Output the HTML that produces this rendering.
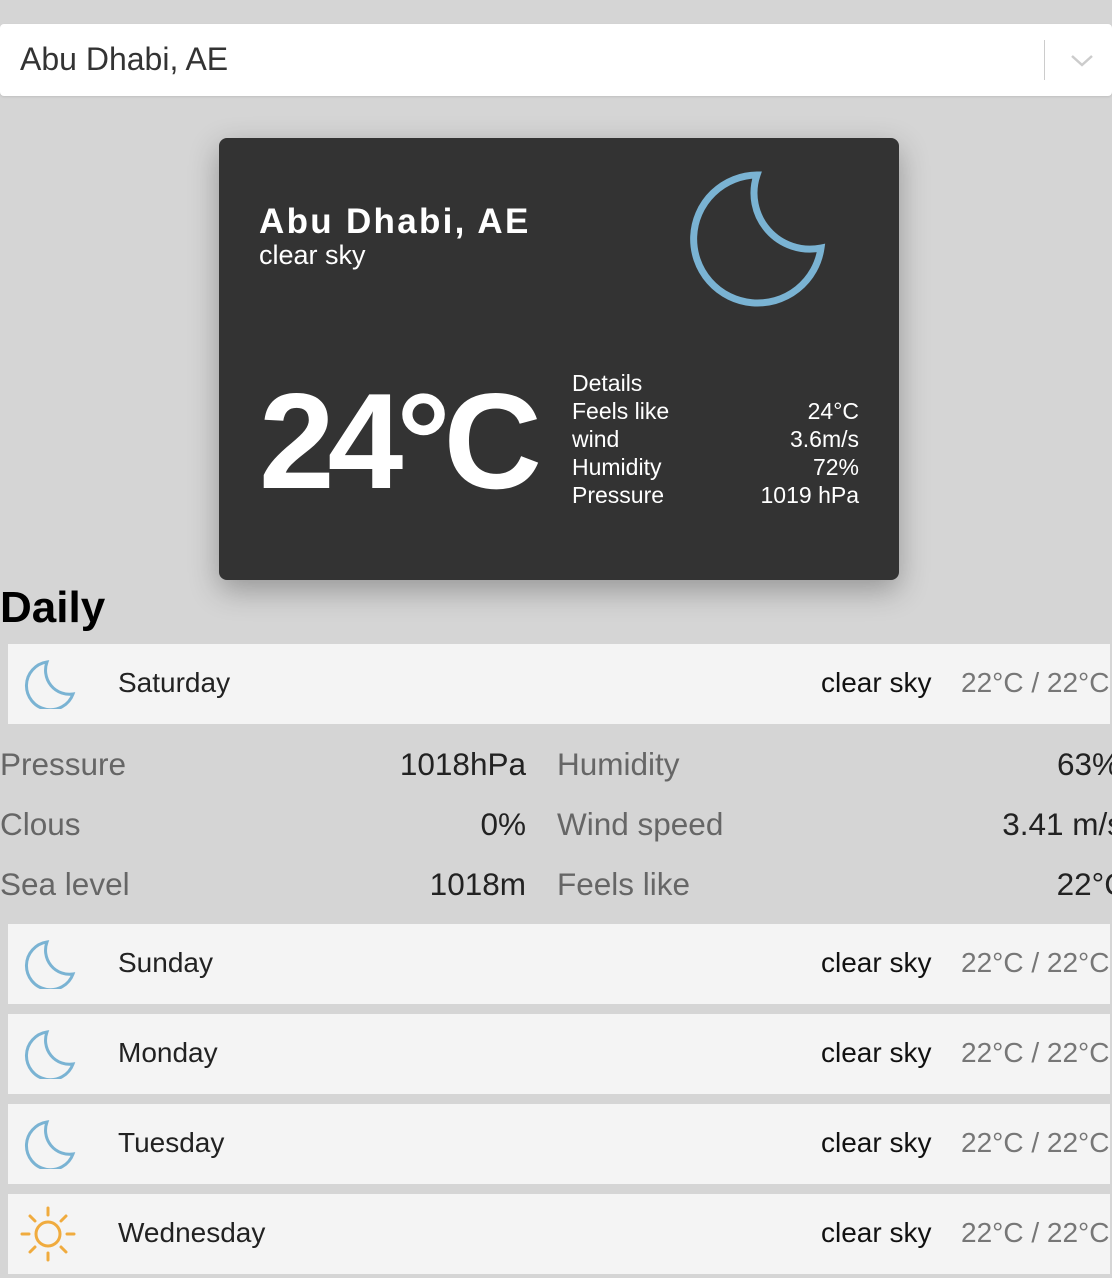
<!DOCTYPE html>
<html><head><meta charset="utf-8"><style>
*{margin:0;padding:0;box-sizing:border-box}
body{width:1112px;height:1278px;background:#d5d5d5;font-family:"Liberation Sans",Arial,sans-serif;position:relative;overflow:hidden}
.a{position:absolute;white-space:nowrap}
.sel{position:absolute;left:0;top:24px;width:1112px;height:72px;background:#fff;border-radius:4px;box-shadow:0 1px 2px rgba(0,0,0,.1)}
.card{position:absolute;left:219px;top:138px;width:680px;height:442px;background:#333;border-radius:8px;box-shadow:0 10px 30px rgba(0,0,0,.3);color:#fff}
.row{position:absolute;left:8px;width:1102px;height:80px;background:#f4f4f4;overflow:hidden}
.row .d{position:absolute;left:110px;top:23px;font-size:28px;color:#222}
.row .c{position:absolute;left:813px;top:23px;font-size:28px;color:#111}
.row .t{position:absolute;left:953px;top:23px;font-size:28px;color:#777}
.row svg{position:absolute;left:10px;top:15px}
.lab{font-size:31.5px;color:#666}
.val{font-size:31.5px;color:#222;text-align:right}
.det{font-size:23px;line-height:28px}
</style></head><body>
<div class="sel">
<div class="a" style="left:20px;top:17px;font-size:32px;color:#333">Abu Dhabi, AE</div>
<div class="a" style="left:1044px;top:16px;width:1px;height:40px;background:#ccc"></div>
<svg class="a" style="left:1070px;top:30px" width="24" height="14"><path d="M2 2 L12 11 L22 2" stroke="#ccc" stroke-width="2.5" fill="none"/></svg>
</div>
<div class="card">
<div class="a" style="left:40px;top:64px;font-size:35px;font-weight:bold;letter-spacing:2.3px">Abu Dhabi, AE</div>
<div class="a" style="left:40px;top:102px;font-size:27px">clear sky</div>
<svg class="a" style="left:0;top:0" width="680" height="442"><path d="M538 37 A64 64 0 1 0 602 110 A56 56 0 0 1 538 37 Z" stroke="#7ab3d3" stroke-width="7" fill="none" stroke-linejoin="miter"/></svg>
<div class="a" style="left:40px;top:228px;font-size:136px;font-weight:bold;letter-spacing:-7px;line-height:150px">24°C</div>
<div class="a det" style="left:353px;top:231px">Details<br>Feels like<br>wind<br>Humidity<br>Pressure</div>
<div class="a det" style="left:480px;top:259px;width:160px;text-align:right">24°C<br>3.6m/s<br>72%<br>1019 hPa</div>
</div>
<div class="a" style="left:0;top:583px;font-size:44px;font-weight:bold;color:#000">Daily</div>

<div class="row" style="top:644px"><svg width="60" height="50"><path d="M37 3 A24 24 0 1 0 63 35 A24 24 0 0 1 37 3 Z" transform="translate(-8,0)" stroke="#7ab3d3" stroke-width="3" fill="none"/></svg><div class="d">Saturday</div><div class="c">clear sky</div><div class="t">22°C / 22°C</div></div>

<div class="a lab" style="left:0;top:746px">Pressure</div><div class="a val" style="left:300px;top:746px;width:226px">1018hPa</div>
<div class="a lab" style="left:557px;top:746px">Humidity</div><div class="a val" style="left:880px;top:746px;width:240px">63%</div>
<div class="a lab" style="left:0;top:806px">Clous</div><div class="a val" style="left:300px;top:806px;width:226px">0%</div>
<div class="a lab" style="left:557px;top:806px">Wind speed</div><div class="a val" style="left:880px;top:806px;width:243px">3.41 m/s</div>
<div class="a lab" style="left:0;top:866px">Sea level</div><div class="a val" style="left:300px;top:866px;width:226px">1018m</div>
<div class="a lab" style="left:557px;top:866px">Feels like</div><div class="a val" style="left:880px;top:866px;width:247px">22°C</div>

<div class="row" style="top:924px"><svg width="60" height="50"><path d="M37 3 A24 24 0 1 0 63 35 A24 24 0 0 1 37 3 Z" transform="translate(-8,0)" stroke="#7ab3d3" stroke-width="3" fill="none"/></svg><div class="d">Sunday</div><div class="c">clear sky</div><div class="t">22°C / 22°C</div></div>
<div class="row" style="top:1014px"><svg width="60" height="50"><path d="M37 3 A24 24 0 1 0 63 35 A24 24 0 0 1 37 3 Z" transform="translate(-8,0)" stroke="#7ab3d3" stroke-width="3" fill="none"/></svg><div class="d">Monday</div><div class="c">clear sky</div><div class="t">22°C / 22°C</div></div>
<div class="row" style="top:1104px"><svg width="60" height="50"><path d="M37 3 A24 24 0 1 0 63 35 A24 24 0 0 1 37 3 Z" transform="translate(-8,0)" stroke="#7ab3d3" stroke-width="3" fill="none"/></svg><div class="d">Tuesday</div><div class="c">clear sky</div><div class="t">22°C / 22°C</div></div>
<div class="row" style="top:1194px"><svg width="60" height="60" style="left:10px;top:10px"><g stroke="#f0ab3e" stroke-width="3" fill="none" stroke-linecap="round"><circle cx="30" cy="30" r="12"/><path d="M30 4v7M30 49v7M4 30h7M49 30h7M12 12l5 5M43 43l5 5M48 12l-5 5M17 43l-5 5"/></g></svg><div class="d">Wednesday</div><div class="c">clear sky</div><div class="t">22°C / 22°C</div></div>
</body></html>
